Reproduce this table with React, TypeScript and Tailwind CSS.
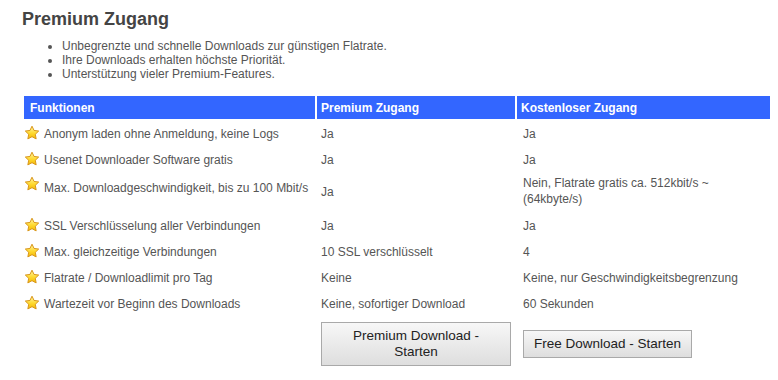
import React from 'react';

type Row = {
  feature: string;
  premium: string;
  free: React.ReactNode;
  tall?: boolean;
};

const rows: Row[] = [
  { feature: 'Anonym laden ohne Anmeldung, keine Logs', premium: 'Ja', free: 'Ja' },
  { feature: 'Usenet Downloader Software gratis', premium: 'Ja', free: 'Ja' },
  {
    feature: 'Max. Downloadgeschwindigkeit, bis zu 100 Mbit/s',
    premium: 'Ja',
    free: (
      <>
        Nein, Flatrate gratis ca. 512kbit/s ~
        <br />
        (64kbyte/s)
      </>
    ),
    tall: true,
  },
  { feature: 'SSL Verschlüsselung aller Verbindungen', premium: 'Ja', free: 'Ja' },
  { feature: 'Max. gleichzeitige Verbindungen', premium: '10 SSL verschlüsselt', free: '4' },
  { feature: 'Flatrate / Downloadlimit pro Tag', premium: 'Keine', free: 'Keine, nur Geschwindigkeitsbegrenzung' },
  { feature: 'Wartezeit vor Beginn des Downloads', premium: 'Keine, sofortiger Download', free: '60 Sekunden' },
];

const Star = () => (
  <svg width="16" height="16" viewBox="0 0 16 16" className="shrink-0">
    <defs>
      <linearGradient id="starFill" x1="0" y1="0" x2="0" y2="1">
        <stop offset="0" stopColor="#fff6a8" />
        <stop offset="0.55" stopColor="#ffd92e" />
        <stop offset="1" stopColor="#f2b705" />
      </linearGradient>
    </defs>
    <path
      d="M8 1.2 L10.05 5.45 L14.7 6.05 L11.3 9.25 L12.15 13.9 L8 11.65 L3.85 13.9 L4.7 9.25 L1.3 6.05 L5.95 5.45 Z"
      fill="url(#starFill)"
      stroke="#d9961a"
      strokeWidth="1"
      strokeLinejoin="round"
    />
  </svg>
);

const App = () => {
  return (
    <div className="min-h-[380px] w-[778px] bg-white font-['Liberation_Sans',Arial,sans-serif] text-[12px] text-[#555]">
      <h1 className="pl-[22px] pt-[8px] text-[18px] font-bold leading-[22px] text-[#444]">Premium Zugang</h1>

      <ul className="mt-[9px] list-disc pl-[62px] leading-[14px] marker:text-[#555]">
        <li>Unbegrenzte und schnelle Downloads zur günstigen Flatrate.</li>
        <li>Ihre Downloads erhalten höchste Priorität.</li>
        <li>Unterstützung vieler Premium-Features.</li>
      </ul>

      <div className="ml-[24px] mt-[15px] grid w-[746px] grid-cols-[291px_198px_253px] gap-x-[2px]">
        {/* Header */}
        <div className="flex h-[23px] items-center bg-[#3366ff] pl-[6px] font-bold text-white">Funktionen</div>
        <div className="flex h-[23px] items-center bg-[#3366ff] pl-[4px] font-bold text-white">Premium Zugang</div>
        <div className="flex h-[23px] items-center bg-[#3366ff] pl-[4px] font-bold text-white">Kostenloser Zugang</div>

        {/* Rows */}
        {rows.map((row, i) => (
          <React.Fragment key={i}>
            <div
              className={
                row.tall
                  ? 'flex h-[40px] items-end gap-[4px] pb-[14px]'
                  : 'flex h-[26px] items-center gap-[4px] pt-[1px]'
              }
            >
              <span className={row.tall ? 'mb-[1px] self-start pt-[5px]' : ''}>
                <Star />
              </span>
              <span className={row.tall ? '' : 'pt-[2px]'}>{row.feature}</span>
            </div>
            <div className={row.tall ? 'flex h-[40px] items-center pl-[4px] pt-[2px]' : 'flex h-[26px] items-center pl-[4px] pt-[3px]'}>
              {row.premium}
            </div>
            <div className={row.tall ? 'flex h-[40px] items-center pl-[6px] leading-[16px]' : 'flex h-[26px] items-center pl-[6px] pt-[3px]'}>
              <div>{row.free}</div>
            </div>
          </React.Fragment>
        ))}

        {/* Buttons */}
        <div />
        <div className="pl-[4px] pt-[7px]">
          <button className="h-[44px] w-[190px] border border-[#a9a9a9] bg-gradient-to-b from-[#f7f7f7] to-[#dedede] text-[13.5px] leading-[16px] text-[#222]">
            Premium Download -
            <br />
            Starten
          </button>
        </div>
        <div className="flex items-center pl-[6px] pt-[7px]">
          <button className="h-[28px] w-[169px] border border-[#a9a9a9] bg-gradient-to-b from-[#f7f7f7] to-[#dedede] text-[13.5px] leading-[16px] text-[#222]">
            Free Download - Starten
          </button>
        </div>
      </div>
    </div>
  );
};

export default App;
